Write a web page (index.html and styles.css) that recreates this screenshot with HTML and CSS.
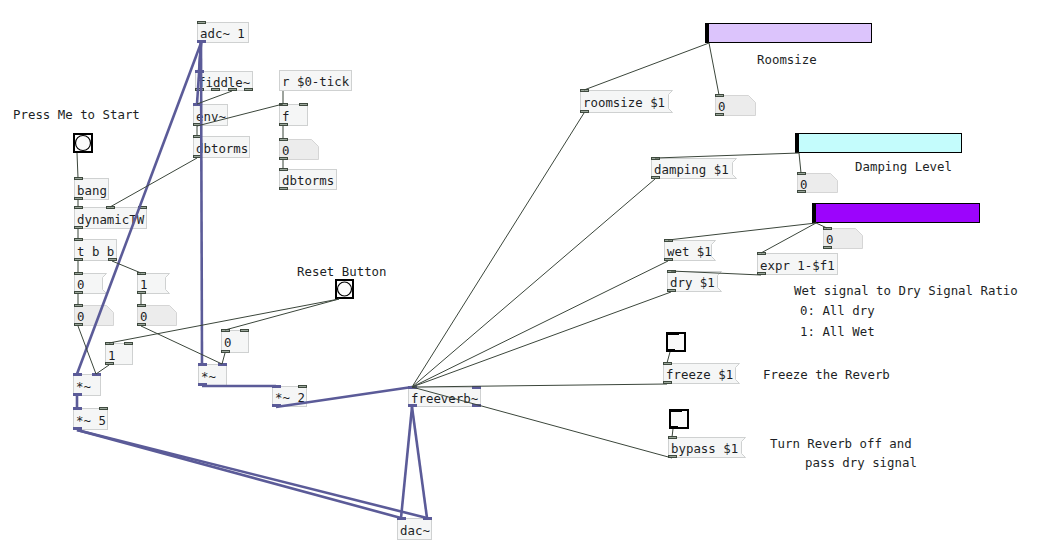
FILE: index.html
```html
<!DOCTYPE html>
<html lang="en">
<head>
  <meta charset="UTF-8">
  <title>freeverb~ patch</title>
  <link rel="stylesheet" href="styles.css">
</head>
<body>
  <div id="canvas">
    <svg id="patch" width="1037" height="544" viewBox="0 0 1037 544"></svg>
  </div>

  <script>
    const NS = 'http://www.w3.org/2000/svg';
    const patch = document.getElementById('patch');
    const IOW = 9;

    const nodes = {
      adc:     { kind: 'obj',  x: 197, y: 22,  w: 52, h: 21, text: 'adc~ 1', ins: 'c', outs: 's' },
      fiddle:  { kind: 'obj',  x: 195, y: 71,  w: 58, h: 20, text: 'fiddle~', ins: 's', outs: 'cccc' },
      env:     { kind: 'obj',  x: 193, y: 104, w: 35, h: 22, text: 'env~', ins: 's', outs: 'c' },
      dbt1:    { kind: 'obj',  x: 193, y: 136, w: 57, h: 22, text: 'dbtorms', ins: 'c', outs: 'c' },
      rtick:   { kind: 'obj',  x: 279, y: 70,  w: 73, h: 21, text: 'r $0-tick', ins: '', outs: 'c' },
      f:       { kind: 'obj',  x: 279, y: 104, w: 29, h: 22, text: 'f', ins: 'cc', outs: 'c' },
      n1:      { kind: 'atom', x: 279, y: 139, w: 40, h: 21, text: '0', ins: 'c', outs: 'c' },
      dbt2:    { kind: 'obj',  x: 279, y: 169, w: 58, h: 21, text: 'dbtorms', ins: 'c', outs: 'c' },
      bng1:    { kind: 'bng',  x: 73,  y: 133, w: 20, h: 20 },
      bangmsg: { kind: 'obj',  x: 74,  y: 178, w: 35, h: 22, text: 'bang', ins: 'c', outs: 'c' },
      dyn:     { kind: 'obj',  x: 74,  y: 207, w: 73, h: 22, text: 'dynamicTW', ins: 'ccc', outs: 'c' },
      tbb:     { kind: 'obj',  x: 74,  y: 239, w: 43, h: 22, text: 't b b', ins: 'c', outs: 'cc' },
      m0:      { kind: 'msg',  x: 74,  y: 273, w: 33, h: 21, text: '0', ins: 'c', outs: 'c' },
      a0:      { kind: 'atom', x: 74,  y: 305, w: 40, h: 21, text: '0', ins: 'c', outs: 'c' },
      m1:      { kind: 'msg',  x: 137, y: 273, w: 33, h: 21, text: '1', ins: 'c', outs: 'c' },
      a1:      { kind: 'atom', x: 137, y: 305, w: 40, h: 21, text: '0', ins: 'c', outs: 'c' },
      one:     { kind: 'obj',  x: 105, y: 343, w: 28, h: 22, text: '1', ins: 'cc', outs: 'c' },
      zero:    { kind: 'obj',  x: 221, y: 330, w: 28, h: 23, text: '0', ins: 'cc', outs: 'c' },
      mulL:    { kind: 'obj',  x: 73,  y: 374, w: 28, h: 22, text: '*~', ins: 'ss', outs: 's' },
      mul5:    { kind: 'obj',  x: 73,  y: 408, w: 35, h: 22, text: '*~ 5', ins: 'sc', outs: 's' },
      mulM:    { kind: 'obj',  x: 198, y: 364, w: 29, h: 22, text: '*~', ins: 'ss', outs: 's' },
      mul2:    { kind: 'obj',  x: 272, y: 386, w: 35, h: 21, text: '*~ 2', ins: 'sc', outs: 's' },
      fv:      { kind: 'obj',  x: 408, y: 387, w: 73, h: 20, text: 'freeverb~', ins: 'ss', outs: 'ss' },
      dac:     { kind: 'obj',  x: 397, y: 518, w: 35, h: 22, text: 'dac~', ins: 'ss', outs: '' },
      bng2:    { kind: 'bng',  x: 335, y: 279, w: 19, h: 20 },
      sl1:     { kind: 'hsl',  x: 705, y: 23,  w: 167, h: 20, color: '#dcc4fc' },
      rmsg:    { kind: 'msg',  x: 580, y: 90,  w: 93, h: 23, text: 'roomsize $1', ins: 'c', outs: 'c' },
      ra:      { kind: 'atom', x: 715, y: 95,  w: 41, h: 21, text: '0', ins: 'c', outs: 'c' },
      sl2:     { kind: 'hsl',  x: 795, y: 133, w: 167, h: 20, color: '#c4fcfc' },
      dmsg:    { kind: 'msg',  x: 651, y: 158, w: 86, h: 21, text: 'damping $1', ins: 'c', outs: 'c' },
      da:      { kind: 'atom', x: 797, y: 173, w: 41, h: 20, text: '0', ins: 'c', outs: 'c' },
      sl3:     { kind: 'hsl',  x: 812, y: 203, w: 168, h: 20, color: '#9c04fc' },
      wa:      { kind: 'atom', x: 823, y: 228, w: 40, h: 21, text: '0', ins: 'c', outs: 'c' },
      wmsg:    { kind: 'msg',  x: 664, y: 240, w: 52, h: 21, text: 'wet $1', ins: 'c', outs: 'c' },
      expr:    { kind: 'obj',  x: 757, y: 253, w: 81, h: 22, text: 'expr 1-$f1', ins: 'c', outs: 'c' },
      drymsg:  { kind: 'msg',  x: 667, y: 271, w: 55, h: 21, text: 'dry $1', ins: 'c', outs: 'c' },
      tg1:     { kind: 'tgl',  x: 666, y: 332, w: 20, h: 20 },
      fmsg:    { kind: 'msg',  x: 663, y: 363, w: 77, h: 21, text: 'freeze $1', ins: 'c', outs: 'c' },
      tg2:     { kind: 'tgl',  x: 669, y: 409, w: 20, h: 20 },
      bmsg:    { kind: 'msg',  x: 668, y: 437, w: 78, h: 21, text: 'bypass $1', ins: 'c', outs: 'c' }
    };

    const comments = [
      [13, 114, 'Press Me to Start'],
      [297, 271, 'Reset Button'],
      [757, 59, 'Roomsize'],
      [855, 166, 'Damping Level'],
      [794, 290, 'Wet signal to Dry Signal Ratio'],
      [800, 310, '0: All dry'],
      [800, 331, '1: All Wet'],
      [763, 374, 'Freeze the Reverb'],
      [770, 443, 'Turn Reverb off and'],
      [805, 462, 'pass dry signal']
    ];

    // [from, outlet, to, inlet, signal?]
    const wires = [
      ['adc', 0, 'fiddle', 0, 1], ['adc', 0, 'env', 0, 1], ['adc', 0, 'mulM', 0, 1], ['adc', 0, 'mulL', 0, 1],
      ['fiddle', 2, 'env', 0], ['env', 0, 'f', 0], ['rtick', 0, 'f', 0], ['f', 0, 'n1', 0], ['n1', 0, 'dbt2', 0],
      ['env', 0, 'dbt1', 0], ['dbt1', 0, 'dyn', 1],
      ['bng1', 0, 'bangmsg', 0], ['bangmsg', 0, 'dyn', 0], ['dyn', 0, 'tbb', 0],
      ['tbb', 0, 'm0', 0], ['tbb', 1, 'm1', 0], ['m0', 0, 'a0', 0], ['m1', 0, 'a1', 0],
      ['a0', 0, 'mulL', 1], ['one', 0, 'mulL', 1], ['bng2', 0, 'one', 0], ['bng2', 0, 'zero', 0],
      ['a1', 0, 'mulM', 1], ['zero', 0, 'mulM', 1],
      ['mulM', 0, 'mul2', 0, 1], ['mul2', 0, 'fv', 0, 1], ['mulL', 0, 'mul5', 0, 1],
      ['mul5', 0, 'dac', 0, 1], ['mul5', 0, 'dac', 1, 1], ['fv', 0, 'dac', 0, 1], ['fv', 0, 'dac', 1, 1],
      ['rmsg', 0, 'fv', 0], ['dmsg', 0, 'fv', 0], ['wmsg', 0, 'fv', 0], ['drymsg', 0, 'fv', 0],
      ['fmsg', 0, 'fv', 0], ['bmsg', 0, 'fv', 0],
      ['sl1', 0, 'rmsg', 0], ['sl1', 0, 'ra', 0], ['sl2', 0, 'dmsg', 0], ['sl2', 0, 'da', 0],
      ['sl3', 0, 'wmsg', 0], ['sl3', 0, 'expr', 0], ['sl3', 0, 'wa', 0],
      ['expr', 0, 'drymsg', 0], ['tg1', 0, 'fmsg', 0], ['tg2', 0, 'bmsg', 0]
    ];

    function el(tag, attrs, cls) {
      const e = document.createElementNS(NS, tag);
      for (const k in attrs) e.setAttribute(k, attrs[k]);
      if (cls) e.setAttribute('class', cls);
      patch.appendChild(e);
      return e;
    }

    function portX(n, i, count) {
      if (count <= 1) return n.x;
      return n.x + Math.round(i * (n.w - IOW) / (count - 1));
    }

    function outPoint(id, i) {
      const n = nodes[id];
      const count = n.outs ? n.outs.length : 1;
      return [portX(n, i, count) + 4, n.y + n.h];
    }

    function inPoint(id, i) {
      const n = nodes[id];
      const count = n.ins ? n.ins.length : 1;
      return [portX(n, i, count) + 4, n.y];
    }

    function label(x, y, text) {
      const t = el('text', { x: x, y: y }, 'label');
      t.textContent = text;
    }

    function drawNode(n) {
      const x = n.x + 0.5, y = n.y + 0.5, w = n.w - 1, h = n.h - 1;
      if (n.kind === 'obj') {
        el('rect', { x: x, y: y, width: w, height: h }, 'box');
      } else if (n.kind === 'msg') {
        const pts = [[x, y], [x + w, y], [x + w - 4, y + 4], [x + w - 4, y + h - 4], [x + w, y + h], [x, y + h]];
        el('polygon', { points: pts.join(' ') }, 'box');
      } else if (n.kind === 'atom') {
        const pts = [[x, y], [x + w - 7, y], [x + w, y + 7], [x + w, y + h], [x, y + h]];
        el('polygon', { points: pts.join(' ') }, 'atom');
      } else if (n.kind === 'bng') {
        el('rect', { x: n.x + 1, y: n.y + 1, width: n.w - 2, height: n.h - 2 }, 'gui-frame');
        el('circle', { cx: n.x + n.w / 2, cy: n.y + n.h / 2, r: n.w / 2 - 2.5 }, 'bng-circle');
      } else if (n.kind === 'tgl') {
        el('rect', { x: n.x + 1, y: n.y + 1, width: n.w - 2, height: n.h - 2 }, 'tgl-frame');
        el('rect', { x: n.x, y: n.y, width: IOW + 4, height: 3 }, 'knob');
        el('rect', { x: n.x, y: n.y + n.h - 3, width: IOW, height: 3 }, 'knob');
      } else if (n.kind === 'hsl') {
        const r = el('rect', { x: x, y: y, width: w, height: h }, 'slider');
        r.style.fill = n.color;
        el('rect', { x: n.x + 1, y: n.y, width: 3, height: n.h }, 'knob');
      }
      if (n.text !== undefined) label(n.x + 3, n.y + n.h / 2 + 1, n.text);
    }

    function drawPorts(n) {
      if (!n.ins) return;
      [...n.ins].forEach((t, i) => {
        el('rect', { x: portX(n, i, n.ins.length) + 0.5, y: n.y - 0.5, width: IOW - 1, height: 2 }, t === 's' ? 'io sig' : 'io');
      });
      [...n.outs].forEach((t, i) => {
        el('rect', { x: portX(n, i, n.outs.length) + 0.5, y: n.y + n.h - 2.5, width: IOW - 1, height: 2 }, t === 's' ? 'io sig' : 'io');
      });
    }

    Object.values(nodes).forEach(drawNode);
    Object.values(nodes).forEach(drawPorts);
    comments.forEach(([x, y, text]) => label(x, y, text));

    wires.forEach(([a, o, b, i, sig]) => {
      const [x1, y1] = outPoint(a, o);
      const [x2, y2] = inPoint(b, i);
      el('line', { x1: x1, y1: y1, x2: x2, y2: y2 }, sig ? 'wire sig' : 'wire');
    });
  </script>
</body>
</html>
```

FILE: styles.css
```css
body {
  margin: 0;
  background-color: #fff;
}
#canvas {
  width: 1037px;
  height: 544px;
  overflow: hidden;
}
#patch {
  display: block;
}
.box {
  fill: #f5f6f6;
  stroke: #cfd1d1;
  stroke-width: 1;
}
.atom {
  fill: #ececec;
  stroke: #d5d5d5;
  stroke-width: 1;
}
.label {
  font-family: "DejaVu Sans Mono", monospace;
  font-size: 12.4px;
  fill: #1d1f26;
  dominant-baseline: central;
}
.io {
  fill: #9aa69a;
  stroke: #3f4a3f;
  stroke-width: 1;
}
.io.sig {
  fill: #5b5b98;
  stroke: #5b5b98;
}
.wire {
  stroke: #3b463b;
  stroke-width: 1;
  fill: none;
}
.wire.sig {
  stroke: #5b5b98;
  stroke-width: 2.6;
}
.gui-frame {
  fill: #fcfcfc;
  stroke: #000;
  stroke-width: 2;
}
.bng-circle {
  fill: #fcfcfc;
  stroke: #000;
  stroke-width: 1.2;
}
.tgl-frame {
  fill: #fafafa;
  stroke: #000;
  stroke-width: 2;
}
.slider {
  stroke: #000;
  stroke-width: 1;
}
.knob {
  fill: #000;
}
```
